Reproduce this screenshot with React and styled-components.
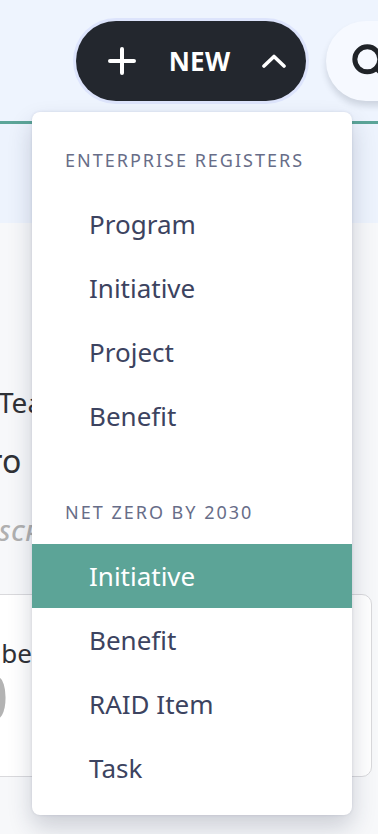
import styled, { createGlobalStyle } from 'styled-components'

const GlobalStyle = createGlobalStyle`
  html, body {
    margin: 0;
    padding: 0;
  }
  body {
    background: #f7f8fa;
    font-family: "Noto Sans", "Open Sans", sans-serif;
    overflow: hidden;
  }
`

const PageS = styled.div`
    position: relative;
    width: 378px;
    height: 834px;
    overflow: hidden;
    background: #f7f8fa;
`
const HeaderS = styled.header`
    display: flex;
    align-items: center;
    gap: 20px;
    height: 121px;
    padding-left: 76px;
    background: #eef4fe;
    border-bottom: 3px solid #5ba598;
`
const NewButtonS = styled.button`
    display: flex;
    align-items: center;
    justify-content: space-between;
    flex-shrink: 0;
    box-sizing: border-box;
    width: 230px;
    height: 80px;
    padding: 0 20px 0 31px;
    border: none;
    border-radius: 40px;
    background: #23272e;
    color: #ffffff;
    box-shadow: 0 0 0 3px #dde4fc;
    font: 700 26px "Noto Sans", sans-serif;
    letter-spacing: 0.3px;
`
const SearchS = styled.button`
    display: flex;
    align-items: center;
    flex-shrink: 0;
    width: 120px;
    height: 80px;
    padding: 0 0 0 23px;
    border: none;
    border-radius: 40px;
    background: #f6f9ff;
    box-shadow: 0 5px 6px rgba(40, 50, 70, 0.16);
    color: #1f2328;
`
const SubBandS = styled.div`
    height: 99px;
    background: #edf3fd;
`
const MainS = styled.main`
    display: flex;
    flex-direction: column;
    padding-top: 161px;
    color: #2f3136;
`
const LabelS = styled.div`
    margin-left: -2px;
    font-size: 28px;
    line-height: 36px;
`
const ValueS = styled.div`
    margin: 21px 0 0 -47px;
    font-size: 32px;
    line-height: 40px;
`
const CaptionS = styled.div`
    margin: 36px 0 0 -30px;
    font-size: 22px;
    line-height: 30px;
    font-style: italic;
    font-weight: 600;
    letter-spacing: 1px;
    color: #b0b0b0;
`
const CardS = styled.section`
    box-sizing: border-box;
    width: 472px;
    height: 183px;
    margin: 47px 0 0 -100px;
    padding: 45px 0 0 40px;
    border: 1.5px solid #d9d9dc;
    border-radius: 10px;
    background: #ffffff;
`
const CardLabelS = styled.div`
    font-size: 26px;
    line-height: 26px;
    white-space: nowrap;
`
const CardNumberS = styled.div`
    margin: 1px 0 0 30px;
    font-size: 66px;
    line-height: 56px;
    color: #b3b3b3;
`
const MenuS = styled.div`
    position: absolute;
    top: 112px;
    left: 32px;
    width: 320px;
    padding-bottom: 15px;
    background: #ffffff;
    border-radius: 8px;
    box-shadow: 0 12px 24px rgba(30, 40, 70, 0.2), 0 0 3px rgba(30, 40, 70, 0.12);
`
const GroupS = styled.div`
    & + & {
        margin-top: 16px;
    }
`
const GroupTitleS = styled.div`
    box-sizing: border-box;
    height: 80px;
    padding: 36px 0 0 33px;
    font-size: 18px;
    line-height: 24px;
    letter-spacing: 2px;
    color: #676d88;
`
const ItemS = styled.div`
    display: flex;
    align-items: center;
    height: 64px;
    padding-left: 57px;
    font-size: 26px;
    color: ${p => (p.active ? '#ffffff' : '#3c4360')};
    background: ${p => (p.active ? '#5ca497' : 'transparent')};
`

const PlusIcon = () => (
    <svg width="30" height="30" viewBox="0 0 30 30" fill="none">
        <path d="M15 3v24M3 15h24" stroke="currentColor" strokeWidth="4" strokeLinecap="round" />
    </svg>
)

const ChevronUp = () => (
    <svg width="24" height="14" viewBox="0 0 24 14" fill="none">
        <path d="M2 12L12 2.5L22 12" stroke="currentColor" strokeWidth="3.6" strokeLinecap="round" strokeLinejoin="round" />
    </svg>
)

const SearchIcon = () => (
    <svg width="40" height="40" viewBox="0 0 24 24" fill="none">
        <circle cx="11" cy="11" r="7.5" stroke="currentColor" strokeWidth="3" />
        <path d="M21 21l-4.6-4.6" stroke="currentColor" strokeWidth="3" strokeLinecap="round" />
    </svg>
)

const groups = [{
    title: 'Enterprise Registers', items: ['Program', 'Initiative', 'Project', 'Benefit']
}, {
    title: 'Net Zero by 2030', items: ['Initiative', 'Benefit', 'RAID Item', 'Task'], active: 'Initiative'
}]

const App = () => {
    return (
        <PageS>
            <GlobalStyle />
            <HeaderS>
                <NewButtonS>
                    <PlusIcon />
                    <span>NEW</span>
                    <ChevronUp />
                </NewButtonS>
                <SearchS>
                    <SearchIcon />
                </SearchS>
            </HeaderS>
            <SubBandS />
            <MainS>
                <LabelS>Team</LabelS>
                <ValueS>Zero</ValueS>
                <CaptionS>DESCRIPTION</CaptionS>
                <CardS>
                    <CardLabelS>Number of benefits</CardLabelS>
                    <CardNumberS>0</CardNumberS>
                </CardS>
            </MainS>
            <MenuS>
                {
                    groups.map(group =>
                        <GroupS key={group.title}>
                            <GroupTitleS>{group.title.toUpperCase()}</GroupTitleS>
                            {
                                group.items.map(item =>
                                    <ItemS key={item} active={item === group.active}>{item}</ItemS>
                                )
                            }
                        </GroupS>
                    )
                }
            </MenuS>
        </PageS>
    )
}
export default App
